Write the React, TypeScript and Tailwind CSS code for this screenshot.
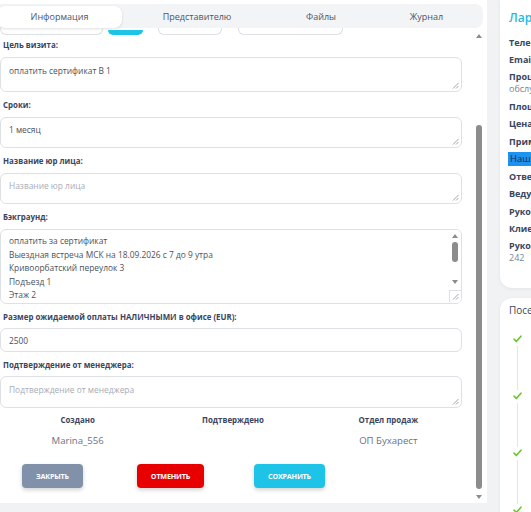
import type { ReactNode } from "react";

const FONT = { fontFamily: '"Open Sans", "Noto Sans", sans-serif' };

function Grip() {
  return (
    <svg width="7" height="7" viewBox="0 0 7 7" className="absolute bottom-[2px] right-[2px]">
      <path d="M6.5 1 L1 6.5 M6.5 4 L4 6.5" stroke="#9a9a9a" strokeWidth="0.9" fill="none" />
    </svg>
  );
}

function Box({
  h,
  text,
  placeholder,
  grip = true,
}: {
  h: string;
  text?: string;
  placeholder?: string;
  grip?: boolean;
}) {
  return (
    <div
      className={`relative w-[462px] rounded-[6px] border border-[#dde0e4] bg-white px-[8px] text-[8.4px] leading-[13px] ${h}`}
    >
      {text ? (
        <span className="text-[#4c515c]">{text}</span>
      ) : (
        <span className="text-[#a7acb5]">{placeholder}</span>
      )}
      {grip && <Grip />}
    </div>
  );
}

function Field({ label, gap = "mb-[6px]", children }: { label: string; gap?: string; children: ReactNode }) {
  return (
    <div className="mb-[7px]">
      <div className={`${gap} pl-[3px] text-[7.9px] font-bold leading-[12px] text-[#3a4660]`}>{label}</div>
      {children}
    </div>
  );
}

const background = [
  "оплатить за сертификат",
  "Выездная встреча МСК на 18.09.2026 с 7 до 9 утра",
  "Кривоорбатский переулок 3",
  "Подъезд 1",
  "Этаж 2",
];

function BackgroundBox() {
  return (
    <div className="relative h-[75px] w-[462px] overflow-hidden rounded-[6px] border border-[#dde0e4] bg-white pl-[8px] pt-[4px] text-[8.4px] leading-[13.6px] text-[#4c515c]">
      {background.map((line) => (
        <div key={line}>{line}</div>
      ))}
      {/* inner scrollbar */}
      <div className="absolute right-0 top-0 flex h-full w-[12px] flex-col items-center bg-white">
        <div className="mt-[4px] h-0 w-0 border-x-[3.5px] border-b-[4px] border-x-transparent border-b-[#8c8c8c]" />
        <div className="mt-[4px] h-[20px] w-[6px] rounded-full bg-[#8c8c8c]" />
        <div className="mt-[18px] h-0 w-0 border-x-[3.5px] border-t-[4px] border-x-transparent border-t-[#8c8c8c]" />
        <div className="relative mt-[6px] h-[12px] w-[12px] border-l border-t border-[#dde0e4]">
          <Grip />
        </div>
      </div>
    </div>
  );
}

const cardRows: { t: string; mt: string; bold?: boolean; hl?: boolean }[] = [
  { t: "Телефон:", mt: "mt-[12px]", bold: true },
  { t: "Email:", mt: "mt-[5px]", bold: true },
  { t: "Процесс:", mt: "mt-[5px]", bold: true },
  { t: "обслуживание", mt: "mt-0" },
  { t: "Площадка:", mt: "mt-[6px]", bold: true },
  { t: "Цена:", mt: "mt-[5px]", bold: true },
  { t: "Примечание:", mt: "mt-[6px]", bold: true },
  { t: "Наш клиент", mt: "mt-[4px]", hl: true },
  { t: "Ответственный:", mt: "mt-[5px]", bold: true },
  { t: "Ведущий:", mt: "mt-[5px]", bold: true },
  { t: "Руководитель:", mt: "mt-[6px]", bold: true },
  { t: "Клиент:", mt: "mt-[5px]", bold: true },
  { t: "Руководитель отдела:", mt: "mt-[5px]", bold: true },
  { t: "242", mt: "mt-0" },
];

function Check() {
  return (
    <svg width="9" height="8" viewBox="0 0 9 8">
      <path d="M1 4.2 L3.4 6.4 L8 1.2" stroke="#6cc72f" strokeWidth="1.6" fill="none" strokeLinecap="round" strokeLinejoin="round" />
    </svg>
  );
}

export default function App() {
  return (
    <div className="flex h-[512px] w-[531px] overflow-hidden bg-[#f1f2f4]" style={FONT}>
      {/* visit form */}
      <div className="flex h-[503px] w-[487px] shrink-0 flex-col bg-white">
        <div className="pr-[4px] pt-[4px]">
          <div className="flex h-[24px] items-end rounded-r-lg bg-[#f3f4f6] text-[9px] text-[#4b5468]">
            <div className="-ml-[3px] flex h-[22px] w-[125px] items-center justify-center rounded-lg bg-white shadow-[0_1px_3px_rgba(0,0,0,0.12)]">
              Информация
            </div>
            <div className="flex h-[22px] w-[150px] items-center justify-center">Представителю</div>
            <div className="flex h-[22px] w-[98px] items-center justify-center">Файлы</div>
            <div className="flex h-[22px] w-[113px] items-center justify-center">Журнал</div>
          </div>
        </div>

        <div className="flex min-h-0 flex-1">
          <div className="w-[474px] overflow-hidden">
            {/* row scrolled under the tabs */}
            <div className="flex h-[7px] items-end">
              <div className="h-[7px] w-[103px] rounded-b-[6px] border-x border-b border-[#dde0e4]" />
              <div className="ml-[5px] h-[5px] w-[35px] rounded-b-[5px] bg-[#1ec3e8]" />
              <div className="ml-[15px] h-[7px] w-[64px] rounded-b-[6px] border-x border-b border-[#dde0e4]" />
              <div className="ml-[16px] h-[7px] w-[105px] rounded-b-[6px] border-x border-b border-[#dde0e4]" />
            </div>

            <div className="mt-[4px]">
              <Field label="Цель визита:">
                <Box h="h-[35px] pt-[6px]" text="оплатить сертификат В 1" />
              </Field>
              <Field label="Сроки:">
                <Box h="h-[31px] pt-[5px]" text="1 месяц" />
              </Field>
              <Field label="Название юр лица:">
                <Box h="h-[31px] pt-[5px]" placeholder="Название юр лица" />
              </Field>
              <Field label="Бэкграунд:">
                <BackgroundBox />
              </Field>
              <Field label="Размер ожидаемой оплаты НАЛИЧНЫМИ в офисе (EUR):" gap="mb-[5px]">
                <Box h="h-[24px] pt-[5px]" text="2500" grip={false} />
              </Field>
              <Field label="Подтверждение от менеджера:" gap="mb-[5px]">
                <Box h="h-[32px] pt-[6px]" placeholder="Подтверждение от менеджера" />
              </Field>
            </div>

            <div className="-mt-[1px] grid w-[466px] grid-cols-3 text-center">
              <div className="text-[7.9px] font-bold leading-[12px] text-[#3a4660]">Создано</div>
              <div className="text-[7.9px] font-bold leading-[12px] text-[#3a4660]">Подтверждено</div>
              <div className="text-[7.9px] font-bold leading-[12px] text-[#3a4660]">Отдел продаж</div>
              <div className="mt-[8px] text-[9.6px] leading-[14px] text-[#6a7388]">Marina_556</div>
              <div />
              <div className="mt-[8px] text-[9.6px] leading-[14px] text-[#6a7388]">ОП Бухарест</div>
            </div>

            <div className="mt-[16px] flex text-[7.2px] font-bold tracking-[-0.2px] text-white">
              <button className="ml-[22px] flex h-[24px] w-[61px] items-center justify-center rounded-[4px] bg-[#8291aa] shadow-[0_2px_4px_rgba(0,0,0,0.18)]">
                ЗАКРЫТЬ
              </button>
              <button className="ml-[54px] flex h-[24px] w-[67px] items-center justify-center rounded-[4px] bg-[#e80000] shadow-[0_2px_4px_rgba(0,0,0,0.18)]">
                ОТМЕНИТЬ
              </button>
              <button className="ml-[50px] flex h-[24px] w-[71px] items-center justify-center rounded-[4px] bg-[#1ec3e8] shadow-[0_2px_4px_rgba(0,0,0,0.18)]">
                СОХРАНИТЬ
              </button>
            </div>
          </div>

          {/* panel scrollbar */}
          <div className="flex w-[10px] flex-col items-center">
            <div className="mt-[6px] h-0 w-0 border-x-[3.5px] border-b-[4px] border-x-transparent border-b-[#8c8c8c]" />
            <div className="mt-[87px] h-[364px] w-[6px] rounded-full bg-[#8c8c8c]" />
            <div className="mt-[6px] h-0 w-0 border-x-[3.5px] border-t-[4px] border-x-transparent border-t-[#8c8c8c]" />
          </div>
        </div>
      </div>

      {/* side cards */}
      <div className="ml-[13px] flex w-[220px] shrink-0 flex-col">
        <div className="flex h-[288px] shrink-0 flex-col rounded-b-xl bg-white px-[9px] pt-[11px] shadow-[0_1px_4px_rgba(0,0,0,0.06)]">
          <div className="whitespace-nowrap text-[12px] font-semibold leading-[14px] text-[#1eb8e6]">Ларионова Марина</div>
          {cardRows.map((r, i) =>
            r.hl ? (
              <div
                key={i}
                className={`${r.mt} -mx-[1px] h-[14px] whitespace-nowrap bg-gradient-to-r from-[#1f8ff0] to-[#1ec3e8] px-[2px] text-[9.5px] leading-[14px] text-[#1d2a44]`}
              >
                {r.t}
              </div>
            ) : (
              <div
                key={i}
                className={`${r.mt} whitespace-nowrap text-[9px] leading-[12px] ${
                  r.bold ? "font-bold text-[#3a4660]" : "text-[#7a8294]"
                }`}
              >
                {r.t}
              </div>
            ),
          )}
        </div>

        <div className="mt-[10px] flex min-h-0 flex-1 flex-col overflow-hidden rounded-t-xl bg-white px-[9px] pt-[6px] shadow-[0_1px_4px_rgba(0,0,0,0.06)]">
          <div className="whitespace-nowrap text-[10px] leading-[13px] text-[#3a4660]">Посещения</div>
          <div className="ml-[4px] mt-[18px] flex flex-col">
            {[0, 1, 2, 3].map((n) => (
              <div key={n} className="flex h-[57px] shrink-0 flex-col">
                <Check />
                {n < 3 && <div className="ml-[4px] mt-[3px] h-[44px] w-px bg-[#e3e5e8]" />}
              </div>
            ))}
          </div>
        </div>
      </div>
    </div>
  );
}
